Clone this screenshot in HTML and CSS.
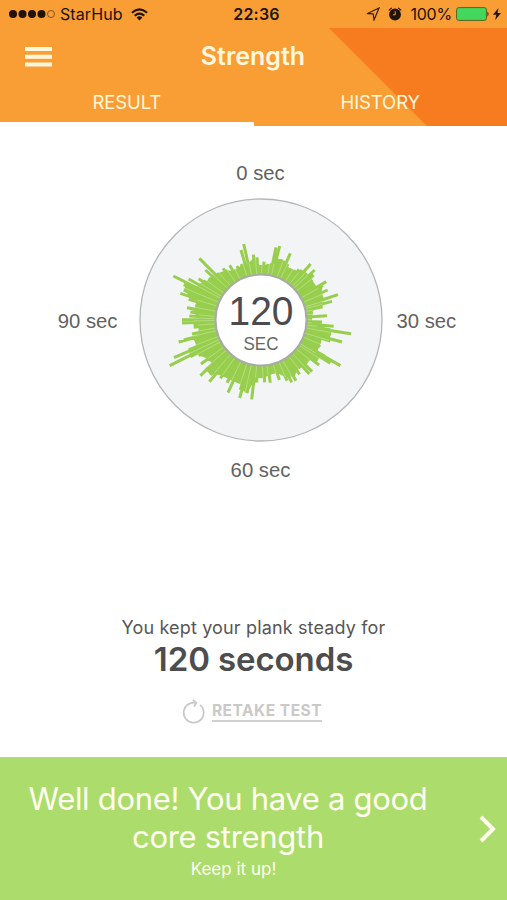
FILE: index.html
```html
<!DOCTYPE html>
<html lang="en">
<head>
<meta charset="utf-8">
<title>Strength</title>
<link rel="stylesheet" href="styles.css">
</head>
<body>
<div class="app">
  <div class="status">
    <div class="carrier">
      <svg class="dots" width="46" height="10" viewBox="0 0 46 10"><circle cx="4" cy="5" r="4"/><circle cx="13.5" cy="5" r="4"/><circle cx="23" cy="5" r="4"/><circle cx="32.5" cy="5" r="4"/><circle cx="42" cy="5" r="3.5" fill="none" stroke="#69401a" stroke-width=".8"/></svg>
      <span>StarHub</span>
      <svg class="wifi" width="17" height="13" viewBox="0 0 17 13"><g fill="none" stroke="#211308" stroke-width="2"><path d="M.9 4.8Q8.5-2 16.100 4.800M3.700 7.800Q8.500 3.500 13.300 7.800"/></g><path d="M5.600 9.500Q8.500 7.200 11.400 9.500L8.500 12.500Z"/></svg>
    </div>
    <div class="clock">22:36</div>
    <div class="power">
      <svg width="14" height="14" viewBox="0 0 14 14"><path d="M1 6.700L13 1L8 13L7.200 6.900Z" fill="none" stroke="#3b220e" stroke-width="1.200"/></svg>
      <svg class="alarm" width="14" height="14" viewBox="0 0 14 14"><circle cx="7" cy="7.500" r="5.900"/><path d="M.8 3.400L3.800.9M10.200.9L13.200 3.400" stroke="#211308" stroke-width="1.200"/><path d="M7.200 4.200V7.800H4.900" fill="none" stroke="#f99d35" stroke-width="1"/></svg>
      <span class="percent">100%</span>
      <svg class="battery" width="34" height="14" viewBox="0 0 34 14"><rect x=".6" y=".6" width="29.800" height="12.800" rx="2" fill="#43d85b" stroke="#5f611e" stroke-width="1"/><path d="M31.500 4.500Q33.500 7 31.500 9.500Z"/></svg>
      <svg width="8" height="12" viewBox="0 0 8 12"><path d="M5.500 0L0 6.800H3.300L2.200 12L8 5H4.500Z"/></svg>
    </div>
  </div>
  <header>
    <div class="title">
      <svg width="28" height="20" viewBox="0 0 28 20"><path d="M0 2H27M0 9.800H27M0 17.600H27" stroke="#fff8df" stroke-width="4"/></svg>
      <h1>Strength</h1>
    </div>
    <nav><a class="tab active"><span>RESULT</span></a><a class="tab"><span>HISTORY</span></a></nav>
  </header>
  <main>
    <div class="tick">0 sec</div>
    <div class="gauge">
      <div class="tick side">90 sec</div>
      <svg class="dial" width="244" height="244" viewBox="-122 -122 244 244">
        <circle r="121" fill="#f2f4f6" stroke="#b5b6b8" stroke-width="1.300"/>
        <g transform="scale(.33333) translate(-392 -390)" fill="none">
          <circle cx="392" cy="390" r="147" fill="#98ce4e"/>
          <path id="body" fill="#98ce4e" d=""/>
          <path id="rays" stroke="#98ce4e" stroke-width="9" stroke-linecap="butt" d=""/>
          <path id="seams" stroke="#b9e088" stroke-width="2.500" d=""/>
        </g>
        <circle r="45.500" fill="#fff" stroke="#a7aaa5" stroke-width="2"/>
        <text class="num" y="5" textLength="65" lengthAdjust="spacingAndGlyphs">120</text>
        <text class="unit" y="29.500" textLength="35" lengthAdjust="spacingAndGlyphs">SEC</text>
      </svg>
      <div class="tick side">30 sec</div>
    </div>
    <div class="tick">60 sec</div>
    <div class="summary">
      <p>You kept your plank steady for</p>
      <h2>120 seconds</h2>
      <a class="retake"><svg width="24" height="26" viewBox="0 0 24 26"><path d="M18 5.900A10 10 0 1 1 8.200 4.300Q11 3.300 14 3.800M11 .8L14.300 3.800L12 7.600" fill="none" stroke="#c9c9c9" stroke-width="1.800"/></svg><span>RETAKE TEST</span></a>
    </div>
  </main>
  <footer>
    <div class="praise"><div class="big">Well done! You have a good</div><div class="big">core strength</div><div class="small">Keep it up!</div></div>
    <svg width="18" height="28" viewBox="0 0 18 28"><path d="M2 2L14 14L2 26" fill="none" stroke="#fffff0" stroke-width="4"/></svg>
  </footer>
</div>
<script src="dial.js"></script>
</body>
</html>
```
FILE: styles.css
```css
* { box-sizing: border-box; }
body { margin: 0; background: #fff; font-family: Inter, "Liberation Sans", sans-serif; color: #565656; }
h1, h2, p { margin: 0; }
svg { display: block; flex: none; }
.app { width: 507px; height: 900px; display: flex; flex-direction: column; overflow: hidden; }
.status { height: 28px; background: #f99d35; color: #211308; fill: #211308; display: grid; grid-template-columns: 1fr auto 1fr; align-items: center; padding: 0 6px 0 9px; font-size: 16px; line-height: 26px; }
.carrier, .power { display: flex; align-items: center; }
.carrier span { margin-left: 5px; letter-spacing: .1px; }
.wifi { margin-left: 8px; }
.clock { font-weight: 600; font-size: 16px; letter-spacing: .2px; padding-left: 3px; }
.power { justify-content: flex-end; }
.alarm { margin-left: 8px; }
.percent { margin-left: 8px; font-size: 16px; letter-spacing: -.2px; }
.battery { margin: 0 3px 0 4px; }
header { height: 98px; background: #f99d35; color: #fff8df; position: relative; display: flex; flex-direction: column; }
header::before { content: ""; position: absolute; inset: 0; background: #f77b1f; clip-path: polygon(329px 0, 100% 0, 100% 100%, 427px 100%); }
.title { position: relative; height: 58px; display: grid; grid-template-columns: 28px 1fr 28px; align-items: center; padding: 0 26px 0 25px; }
.title h1 { text-align: center; font-size: 25px; font-weight: 600; line-height: 30px; padding-bottom: 2px; }
nav { position: relative; display: flex; height: 40px; }
.tab { flex: 1; text-align: center; font-size: 18.500px; line-height: 33px; letter-spacing: -.1px; }
.active { border-bottom: 4px solid #fff; }
main { flex: 1; display: flex; flex-direction: column; align-items: center; padding: 34px 0 0 14px; }
.tick { font: 20.300px/26px "Liberation Sans", sans-serif; height: 26px; color: #626262; }
.gauge { display: flex; align-items: center; gap: 14px; margin: 12px 0 15px; }
.side { width: 69px; white-space: nowrap; padding-top: 2px; height: 28px; }
.side:first-child { text-align: right; padding-right: 7px; }
.num { font: 41.500px "Liberation Sans", sans-serif; text-anchor: middle; fill: #4c4b4e; }
.unit { font: 18px "Liberation Sans", sans-serif; text-anchor: middle; fill: #666; }
.summary { display: flex; flex-direction: column; align-items: center; margin: 132px 14px 0 0; }
.summary p { font-size: 18px; line-height: 26px; letter-spacing: .15px; }
.summary h2 { font-size: 33px; line-height: 38px; font-weight: 600; color: #4d4d4d; letter-spacing: -.1px; margin-top: -1px; }
.retake { display: flex; align-items: center; gap: 6px; height: 26px; margin: 21px 3px 0 0; color: #c9c9c9; font-size: 15.500px; font-weight: 700; }
.retake span { line-height: 18px; border-bottom: 2px solid #d0d0d0; letter-spacing: .5px; }
footer { height: 143px; background: #acdc6c; border-top: 1px solid #b9d594; color: #fffff0; display: flex; align-items: center; padding-right: 10px; }
.praise { flex: 1; text-align: center; padding: 3px 23px 0 0; }
.big { font-size: 31px; line-height: 38px; letter-spacing: -.3px; }
.small { font-size: 17px; line-height: 26px; padding-left: 11px; }
```
FILE: dial.js
```js
// Tip of each ray, clockwise from the top.
const tips = [[401,215],[413,222],[424,220],[437,172],[448,168],[455,208],[465,213],[480,190],[473,222],[484,236],[495,240],[506,238],[515,240],[527,238],[541,222],[530,250],[553,240],[550,255],[545,268],[588,275],[578,285],[592,300],[575,308],[623,314],[600,322],[605,334],[575,338],[577,350],[550,358],[548,368],[590,377],[545,385],[545,393],[575,396],[563,402],[610,409],[600,419],[662,431],[602,432],[635,456],[600,453],[572,458],[570,470],[630,527],[585,500],[600,520],[566,525],[560,515],[545,545],[530,522],[537,552],[510,535],[508,553],[497,572],[484,577],[470,560],[470,572],[447,570],[440,550],[420,578],[418,555],[403,577],[391,565],[379,577],[364,628],[350,610],[328,624],[330,600],[308,575],[293,608],[290,578],[280,560],[270,565],[237,575],[240,555],[210,557],[222,545],[212,522],[235,510],[205,497],[118,527],[131,503],[180,500],[175,480],[145,456],[160,450],[190,448],[185,432],[205,425],[190,412],[190,403],[155,399],[155,389],[205,380],[177,378],[180,366],[170,353],[195,345],[175,328],[150,310],[160,300],[160,284],[200,290],[129,258],[175,267],[205,266],[220,272],[235,265],[225,240],[207,205],[260,250],[278,235],[285,240],[298,226],[310,240],[320,228],[333,222],[332,180],[340,162],[352,220],[369,194],[380,202],[390,225]];
document.getElementById("rays").setAttribute("d", tips.map(p => `M392 390L${p}`).join(""));
const polar = tips.map(([x, y]) => [Math.atan2(y - 390, x - 392), Math.hypot(x - 392, y - 390)]).sort((a, b) => a[0] - b[0]);
const n = polar.length;
const at = (a, r) => `${392 + r * Math.cos(a)} ${390 + r * Math.sin(a)}`;
const low = polar.map((p, i) => Math.min(polar[(i + n - 1) % n][1], p[1], polar[(i + 1) % n][1]) - 1);
// Solid mass behind the rays, up to the shortest of neighbouring rays.
document.getElementById("body").setAttribute("d", "M" + polar.map(([a], i) => at(a, low[i])).join("L") + "Z");
document.getElementById("seams").setAttribute("d", polar.map(([a], i) => i % 2 ? "" : `M392 390L${at(a + .026, low[i])}`).join(""));
```
